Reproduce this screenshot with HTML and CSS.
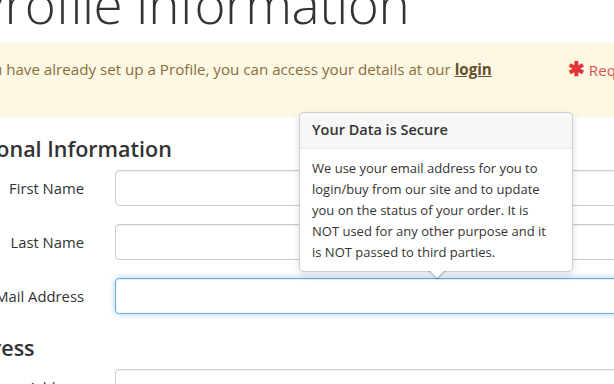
FILE: index.html
```html
<!DOCTYPE html>
<html lang="en">
<head>
    <meta charset="UTF-8">
    <title>Profile Information</title>
    <link rel="stylesheet" href="styles.css">
</head>
<body>
<div class="page">
    <h1 class="pageTitle">Profile Information</h1>

    <div class="alertBox">
        <p>If you have already set up a Profile, you can access your details at our <a href="#">login</a></p>
        <span class="required"><i>&#10033;</i> Required</span>
    </div>

    <form class="profileForm">
        <h3>Personal Information</h3>
        <div class="formRow">
            <label>First Name</label>
            <input type="text">
        </div>
        <div class="formRow">
            <label>Last Name</label>
            <input type="text">
        </div>
        <div class="formRow">
            <label>E-Mail Address</label>
            <input type="text" class="focus">
        </div>

        <h3>Address</h3>
        <div class="formRow">
            <label>Address</label>
            <input type="text">
        </div>
    </form>

    <div class="popover">
        <div class="popoverTitle">Your Data is Secure</div>
        <div class="popoverContent">
            We use your email address for you to<br>
            login/buy from our site and to update<br>
            you on the status of your order. It is<br>
            NOT used for any other purpose and it<br>
            is NOT passed to third parties.
        </div>
        <i class="arrow"></i>
    </div>
</div>
</body>
</html>
```

FILE: styles.css
```css
html, body {
    margin: 0;
    height: 100%;
    overflow: hidden;
    background: #fff;
}

body {
    font-family: "Open Sans", "Noto Sans", sans-serif;
    color: #333333;
}

.page {
    position: relative;
    width: 738px;
    margin: -28px 0 0 -70px;
}

.pageTitle {
    margin: 0 0 0 44px;
    font-size: 53px;
    font-weight: 300;
    line-height: 64px;
    color: #333333;
    letter-spacing: -0.5px;
}

.alertBox {
    display: flex;
    align-items: flex-start;
    height: 74px;
    box-sizing: border-box;
    margin-top: 7px;
    padding: 14px 15px 0 33px;
    background: #fcf8e3;
    color: #8a6d3b;
    font-size: 15.15px;
    line-height: 24px;
}

.alertBox p {
    margin: 0;
}

.alertBox a {
    color: #66512c;
    font-weight: bold;
    text-decoration: underline;
}

.alertBox .required {
    margin-left: auto;
    color: #d9534f;
}

.alertBox .required i {
    font-style: normal;
    font-weight: bold;
    font-size: 20px;
    color: #e3343c;
}

.profileForm {
    display: flex;
    flex-direction: column;
    padding-top: 16px;
}

.profileForm h3 {
    margin: 3px 0 8px 21px;
    font-size: 21.5px;
    font-weight: 600;
    line-height: 26px;
    color: #333333;
}

.formRow {
    display: grid;
    grid-template-columns: 170px 1fr;
    column-gap: 15px;
    align-items: center;
    margin-bottom: 18px;
}

.formRow label {
    padding-right: 16px;
    text-align: right;
    font-size: 14.8px;
}

.formRow input {
    height: 36px;
    box-sizing: border-box;
    border: 1px solid #cccccc;
    border-radius: 4px;
    box-shadow: inset 0 1px 1px rgba(0, 0, 0, 0.075);
    outline: none;
    font: inherit;
}

.formRow input.focus {
    border-color: #66afe9;
    box-shadow: inset 0 1px 1px rgba(0, 0, 0, 0.075), 0 0 6px rgba(102, 175, 233, 0.6);
}

.popover {
    position: absolute;
    left: 369px;
    top: 140px;
    width: 274px;
    box-sizing: border-box;
    background: #fff;
    border: 1px solid rgba(0, 0, 0, 0.2);
    border-radius: 5px;
    box-shadow: 0 3px 8px rgba(0, 0, 0, 0.12);
}

.popoverTitle {
    padding: 7px 12px 8px 12px;
    background: #f7f7f7;
    border-bottom: 1px solid #ebebeb;
    border-radius: 5px 5px 0 0;
    font-size: 14.5px;
    font-weight: 600;
    line-height: 20px;
}

.popoverContent {
    padding: 9px 12px 8px 12px;
    font-size: 13px;
    line-height: 21px;
}

.popover .arrow {
    position: absolute;
    left: 128px;
    bottom: -9px;
    width: 0;
    height: 0;
    border-left: 9px solid transparent;
    border-right: 9px solid transparent;
    border-top: 9px solid rgba(0, 0, 0, 0.2);
}

.popover .arrow:after {
    content: "";
    position: absolute;
    left: -8px;
    top: -10px;
    border-left: 8px solid transparent;
    border-right: 8px solid transparent;
    border-top: 8px solid #fff;
}
```
